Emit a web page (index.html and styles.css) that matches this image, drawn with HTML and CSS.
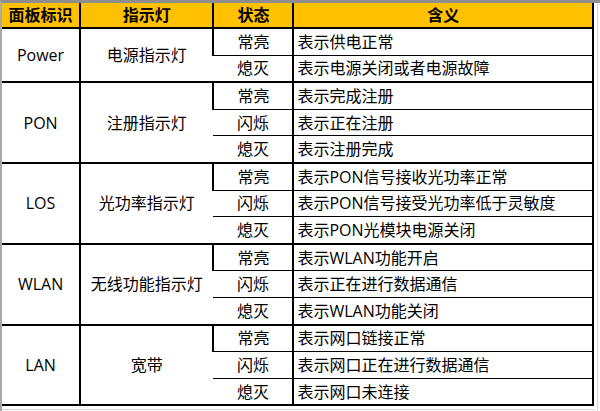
FILE: index.html
```html
<!DOCTYPE html>
<html lang="zh-CN">
<head>
<meta charset="utf-8">
<title>面板指示灯说明</title>
<link rel="stylesheet" href="styles.css">
</head>
<body>
<div class="sheet">
  <div class="main">
    <table class="led">
      <colgroup>
        <col class="c1"><col class="c2"><col class="c3"><col class="c4">
      </colgroup>
      <thead>
        <tr><th>面板标识</th><th>指示灯</th><th>状态</th><th>含义</th></tr>
      </thead>
      <tbody class="grp">
        <tr><td rowspan="2">Power</td><td rowspan="2">电源指示灯</td><td class="st">常亮</td><td class="m">表示供电正常</td></tr>
        <tr><td class="st">熄灭</td><td class="m">表示电源关闭或者电源故障</td></tr>
      </tbody>
      <tbody class="grp">
        <tr><td rowspan="3">PON</td><td rowspan="3">注册指示灯</td><td class="st">常亮</td><td class="m">表示完成注册</td></tr>
        <tr><td class="st">闪烁</td><td class="m">表示正在注册</td></tr>
        <tr><td class="st">熄灭</td><td class="m">表示注册完成</td></tr>
      </tbody>
      <tbody class="grp">
        <tr><td rowspan="3">LOS</td><td rowspan="3">光功率指示灯</td><td class="st">常亮</td><td class="m">表示PON信号接收光功率正常</td></tr>
        <tr><td class="st">闪烁</td><td class="m">表示PON信号接受光功率低于灵敏度</td></tr>
        <tr><td class="st">熄灭</td><td class="m">表示PON光模块电源关闭</td></tr>
      </tbody>
      <tbody class="grp">
        <tr><td rowspan="3">WLAN</td><td rowspan="3">无线功能指示灯</td><td class="st">常亮</td><td class="m">表示WLAN功能开启</td></tr>
        <tr><td class="st">闪烁</td><td class="m">表示正在进行数据通信</td></tr>
        <tr><td class="st">熄灭</td><td class="m">表示WLAN功能关闭</td></tr>
      </tbody>
      <tbody class="grp">
        <tr><td rowspan="3">LAN</td><td rowspan="3">宽带</td><td class="st">常亮</td><td class="m">表示网口链接正常</td></tr>
        <tr><td class="st">闪烁</td><td class="m">表示网口正在进行数据通信</td></tr>
        <tr><td class="st">熄灭</td><td class="m">表示网口未连接</td></tr>
      </tbody>
    </table>
    <div class="below"></div>
  </div>
  <div class="side"></div>
</div>
</body>
</html>
```
FILE: styles.css
```css
html, body {
  margin: 0;
  padding: 0;
  background: #ffffff;
}
body {
  width: 600px;
  height: 411px;
  overflow: hidden;
  font-family: "Open Sans", "Noto Sans CJK SC", sans-serif;
  color: #000;
}
.sheet {
  display: flex;
  height: 411px;
  box-sizing: border-box;
  border-top: 3px solid #8e8e8e;
  border-left: 2px solid #a8a8a8;
}
.main {
  display: flex;
  flex-direction: column;
  width: 593px;
}
.side {
  flex: 1;
  border-right: 1px solid #d6d6d6;
  margin-right: 2px;
}
.below {
  height: 3px;
  border-bottom: 1px solid #d6d6d6;
}
.led {
  border-collapse: collapse;
  table-layout: fixed;
  width: 592px;
  border-right: 2px solid #000;
  border-bottom: 2px solid #000;
}
.c1 { width: 78px; }
.c2 { width: 133px; }
.c3 { width: 80px; }
.c4 { width: 299px; }
.led th {
  background: #ffc000;
  font-weight: 700;
  font-size: 16px;
  height: 24px;
  padding: 0;
  line-height: 20px;
  text-align: center;
  border-bottom: 2px solid #000;
  border-left: 2px solid #000;
}
.led th:first-child,
.led td:first-child {
  border-left: none;
}
.led td {
  font-size: 16px;
  line-height: 20px;
  padding: 0;
  height: 25.6px;
  text-align: center;
  vertical-align: middle;
  border-left: 2px solid #000;
  border-bottom: 1px solid #000;
}
.led td.m {
  text-align: left;
  padding-left: 3px;
}
.led tbody.grp {
  border-bottom: 2px solid #000;
}
```
